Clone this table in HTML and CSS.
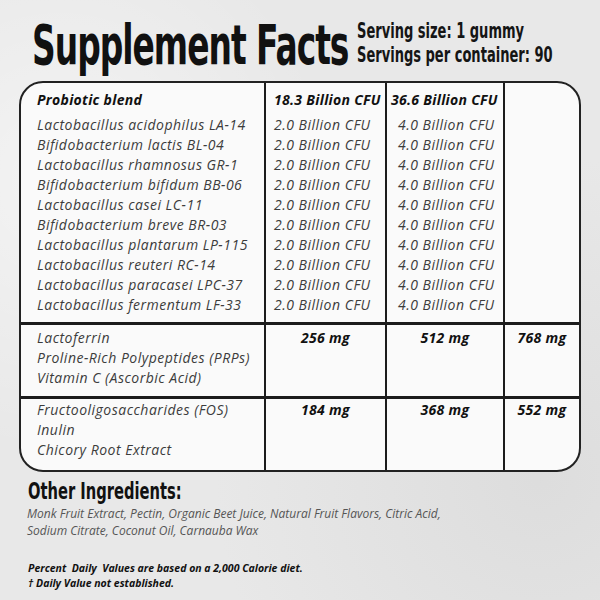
FILE: index.html
```html
<!DOCTYPE html>
<html>
<head>
<meta charset="utf-8">
<link rel="stylesheet" href="styles.css">
</head>
<body>
<div class="page">
  <header class="head">
    <h1 class="title">Supplement Facts</h1>
    <div class="serving">
      <div>Serving size: 1 gummy</div>
      <div>Servings per container: 90</div>
    </div>
  </header>
  <div class="facts">
    <div class="sec sec1">
      <div class="cell c1">
        <div class="ln hd">Probiotic blend</div>
        <div class="ln">Lactobacillus acidophilus LA-14</div>
        <div class="ln">Bifidobacterium lactis BL-04</div>
        <div class="ln">Lactobacillus rhamnosus GR-1</div>
        <div class="ln">Bifidobacterium bifidum BB-06</div>
        <div class="ln">Lactobacillus casei LC-11</div>
        <div class="ln">Bifidobacterium breve BR-03</div>
        <div class="ln">Lactobacillus plantarum LP-115</div>
        <div class="ln">Lactobacillus reuteri RC-14</div>
        <div class="ln">Lactobacillus paracasei LPC-37</div>
        <div class="ln">Lactobacillus fermentum LF-33</div>
      </div>
      <div class="cell c2">
        <div class="ln hd">18.3 Billion CFU</div>
        <div class="ln">2.0 Billion CFU</div>
        <div class="ln">2.0 Billion CFU</div>
        <div class="ln">2.0 Billion CFU</div>
        <div class="ln">2.0 Billion CFU</div>
        <div class="ln">2.0 Billion CFU</div>
        <div class="ln">2.0 Billion CFU</div>
        <div class="ln">2.0 Billion CFU</div>
        <div class="ln">2.0 Billion CFU</div>
        <div class="ln">2.0 Billion CFU</div>
        <div class="ln">2.0 Billion CFU</div>
      </div>
      <div class="cell c3">
        <div class="ln hd">36.6 Billion CFU</div>
        <div class="ln">4.0 Billion CFU</div>
        <div class="ln">4.0 Billion CFU</div>
        <div class="ln">4.0 Billion CFU</div>
        <div class="ln">4.0 Billion CFU</div>
        <div class="ln">4.0 Billion CFU</div>
        <div class="ln">4.0 Billion CFU</div>
        <div class="ln">4.0 Billion CFU</div>
        <div class="ln">4.0 Billion CFU</div>
        <div class="ln">4.0 Billion CFU</div>
        <div class="ln">4.0 Billion CFU</div>
      </div>
      <div class="cell c4"></div>
    </div>
    <div class="sec sec2">
      <div class="cell c1">
        <div class="ln">Lactoferrin</div>
        <div class="ln">Proline-Rich Polypeptides (PRPs)</div>
        <div class="ln">Vitamin C (Ascorbic Acid)</div>
      </div>
      <div class="cell c2 amt"><div class="ln">256 mg</div></div>
      <div class="cell c3 amt"><div class="ln">512 mg</div></div>
      <div class="cell c4 amt"><div class="ln">768 mg</div></div>
    </div>
    <div class="sec sec3">
      <div class="cell c1">
        <div class="ln">Fructooligosaccharides (FOS)</div>
        <div class="ln">Inulin</div>
        <div class="ln">Chicory Root Extract</div>
      </div>
      <div class="cell c2 amt"><div class="ln">184 mg</div></div>
      <div class="cell c3 amt"><div class="ln">368 mg</div></div>
      <div class="cell c4 amt"><div class="ln">552 mg</div></div>
    </div>
  </div>
  <section class="other">
    <h2 class="other-title">Other Ingredients:</h2>
    <p class="other-list">Monk Fruit Extract, Pectin, Organic Beet Juice, Natural Fruit Flavors, Citric Acid,<br>Sodium Citrate, Coconut Oil, Carnauba Wax</p>
    <p class="note">Percent&nbsp; Daily&nbsp; Values are based on a 2,000 Calorie diet.<br>† Daily Value not established.</p>
  </section>
</div>
</body>
</html>
```

FILE: styles.css
```css
html, body {
  margin: 0;
  padding: 0;
}
body {
  width: 600px;
  height: 600px;
  background: #e9e9e9;
  font-family: "Open Sans", "DejaVu Sans", sans-serif;
  color: #222;
  overflow: hidden;
}
.page {
  width: 600px;
  height: 600px;
  background:
    radial-gradient(circle at 10% 30%, rgba(255,255,255,0.5), transparent 40%),
    radial-gradient(circle at 90% 80%, rgba(200,200,200,0.35), transparent 45%),
    #e8e8e8;
}
.head {
  display: flex;
  align-items: flex-start;
  padding: 0 0 0 32px;
  height: 81px;
}
.title {
  margin: 14px 0 0 0;
  font-family: "DejaVu Sans Condensed", "DejaVu Sans", sans-serif;
  font-weight: bold;
  font-size: 55px;
  line-height: 62px;
  letter-spacing: -1.5px;
  color: #111;
  transform: scaleX(0.665);
  transform-origin: left center;
  white-space: nowrap;
  width: 325px;
}
.serving {
  margin-top: 19px;
  font-family: "DejaVu Sans Condensed", "DejaVu Sans", sans-serif;
  font-weight: bold;
  font-size: 21px;
  line-height: 24px;
  color: #151515;
  transform: scaleX(0.69);
  transform-origin: left center;
  white-space: nowrap;
}
.facts {
  margin-left: 19px;
  width: 562px;
  box-sizing: border-box;
  border: 2.5px solid #222;
  border-radius: 24px;
  background: #fafafa;
  overflow: hidden;
}
.sec {
  display: grid;
  grid-template-columns: 245px 121px 118px 1fr;
}
.sec + .sec {
  border-top: 3px solid #1c1c1c;
}
.cell {
  border-right: 2.5px solid #1c1c1c;
}
.cell.c4 {
  border-right: none;
}
.ln {
  height: 20px;
  line-height: 20px;
  font-size: 14px;
  letter-spacing: 0.5px;
  font-style: italic;
  color: #3c3c3c;
  white-space: nowrap;
}
.ln.hd {
  font-weight: bold;
  color: #111;
  letter-spacing: 0.3px;
  margin-bottom: 5px;
}
.sec1 .cell {
  padding: 7px 0 7px 0;
}
.sec1 .c1 { padding-left: 16px; }
.sec1 .c2 { padding-left: 8px; }
.sec1 .c3 { padding-left: 4px; }
.sec1 .c3 .ln:not(.hd) { padding-left: 7px; }
.sec2 .cell { padding: 3px 0 8px 0; }
.sec3 .cell { padding: 1px 0 10px 0; }
.sec2 .c1, .sec3 .c1 { padding-left: 16px; }
.amt .ln {
  text-align: center;
  font-weight: bold;
  letter-spacing: 0.3px;
  color: #111;
}
.other {
  padding: 5px 0 0 28px;
}
.other-title {
  margin: 0;
  font-family: "DejaVu Sans Condensed", "DejaVu Sans", sans-serif;
  font-weight: bold;
  font-size: 23px;
  line-height: 28px;
  color: #111;
  transform: scaleX(0.71);
  transform-origin: left center;
}
.other-list {
  margin: 0 0 0 -1px;
  font-size: 12px;
  font-style: italic;
  line-height: 17px;
  color: #555;
}
.note {
  margin: 22px 0 0 0;
  font-size: 10.5px;
  font-style: italic;
  font-weight: bold;
  line-height: 15px;
  color: #111;
}
```
